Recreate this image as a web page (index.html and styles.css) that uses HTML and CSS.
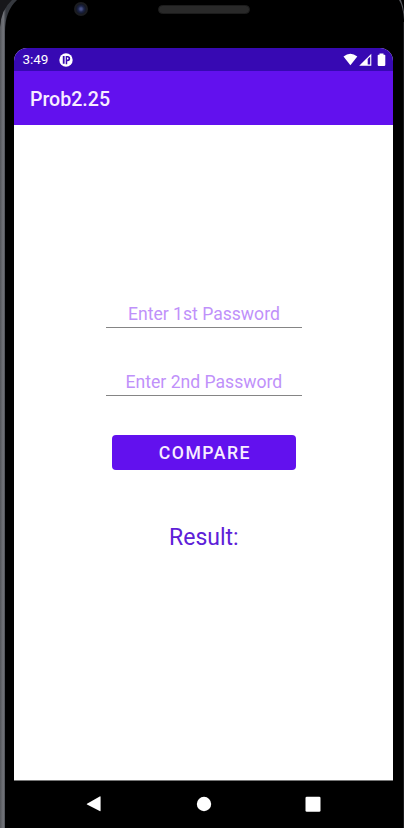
FILE: index.html
```html
<!DOCTYPE html>
<html lang="en">
<head>
<meta charset="utf-8">
<title>Prob2.25</title>
<link rel="stylesheet" href="styles.css">
</head>
<body>
<div class="phone">
  <svg class="frame" width="404" height="828" viewBox="0 0 404 828" aria-hidden="true">
    <defs>
      <linearGradient id="edge" x1="0" x2="6" y1="0" y2="0" gradientUnits="userSpaceOnUse">
        <stop offset="0" stop-color="#54565b"/>
        <stop offset=".55" stop-color="#73757b"/>
        <stop offset="1" stop-color="#35383e"/>
      </linearGradient>
    </defs>
    <path d="M0 0H15Q0 12 0 27Z" fill="#17171a"/>
    <path d="M0 828V27Q1 10 12 0H17Q5 11 5 32V828Z" fill="url(#edge)"/>
    <path d="M399 0Q403 6 404 20V12Q403 5 401 0Z" fill="#55575c"/>
    <path d="M403.5 22V828" stroke="#1c1c1e"/>
  </svg>
  <header class="bezel">
    <span class="camera"></span>
    <span class="speaker"></span>
  </header>
  <main class="screen">
    <div class="status">
      <span class="clock">3:49</span>
      <svg class="notice" width="14" height="14" viewBox="0 0 14 14"><circle cx="7" cy="7" r="6.7" fill="#fff"/><path d="M3.8 3H5.6V10.8H3.8Z" fill="#3709b3"/><path fill-rule="evenodd" d="M6.7 3H8.6A2.6 2.6 0 0 1 8.6 8.2H8.2V11.2H6.7ZM8 4.6V6.6H8.5A1 1 0 0 0 8.5 4.6Z" fill="#3709b3"/></svg>
      <svg class="signals" width="44" height="14" viewBox="0 0 44 14" fill="#fff"><path d="M.5 3.5Q7.3-1.8 14.3 3.5L7.4 12.3Z"/><path fill-rule="evenodd" d="M16.2 12.8 28.3.8V12.8ZM24.7 6V11.5H27.2V3.6Z"/><path d="M36.5 1.7V.6H40.5V1.7H41.5Q42.3 1.7 42.3 2.5V12.1Q42.3 12.9 41.5 12.9H35.5Q34.7 12.9 34.7 12.1V2.5Q34.7 1.7 35.5 1.7Z"/></svg>
    </div>
    <div class="appbar"><h1 class="title">Prob2.25</h1></div>
    <form class="content">
      <input class="field" type="text" placeholder="Enter 1st Password" aria-label="Enter 1st Password">
      <input class="field" type="text" placeholder="Enter 2nd Password" aria-label="Enter 2nd Password">
      <button class="compare" type="button">COMPARE</button>
      <p class="result">Result:</p>
    </form>
  </main>
  <nav class="nav">
    <svg width="16" height="18" viewBox="0 0 16 18" fill="#fff"><path d="M1 8.7 13.7 1.4Q14.6 1 14.6 2V15.6Q14.6 16.6 13.7 16.1L1 9.5Q.4 9.1 1 8.7Z"/></svg>
    <svg width="16" height="18" viewBox="0 0 16 18" fill="#fff"><circle cx="8" cy="9" r="7.2"/></svg>
    <svg width="16" height="18" viewBox="0 0 16 18" fill="#fff"><rect x=".5" y="1.7" width="15" height="15" rx="1.3"/></svg>
  </nav>
</div>
</body>
</html>
```
FILE: styles.css
```css
* { box-sizing: border-box; }
body { margin: 0; background: #000; font-family: Roboto, sans-serif; }
.phone { position: relative; display: flex; flex-direction: column; width: 404px; height: 828px; overflow: hidden; background: #000; }
.frame { position: absolute; top: 0; left: 0; }
.bezel { display: flex; align-items: flex-start; height: 48px; padding: 2px 0 0 74px; }
.camera { width: 14px; height: 14px; border-radius: 50%; border: 2px solid #1b1c20; background: radial-gradient(circle, #475086 0 1px, #1c2344 3px, #141828 5px); }
.speaker { width: 92px; height: 9px; margin: 3px 0 0 70px; border-radius: 5px; border: 1px solid #1c1c1c; background: #292929; }
.screen { width: 379px; height: 733px; margin-left: 14.4px; border-radius: 13px 13px 0 0; overflow: hidden; background: #fff; border-bottom: 1px solid #777; }
.status { display: flex; align-items: center; height: 23px; padding: 0 6px 0 8px; background: #3709b3; color: #fff; }
.clock { width: 37px; font-size: 13.5px; line-height: 23px; }
.signals { margin-left: auto; }
.appbar { display: flex; align-items: center; height: 54px; padding: 3px 15.5px 0; background: #6211ee; }
.title { margin: 0; color: #f8edff; font-size: 19.6px; font-weight: 500; line-height: 25px; }
.content { display: flex; flex-direction: column; align-items: center; padding-top: 173px; }
.field { width: 196px; height: 30px; margin: 0 0 38px; padding: 3px 0 0; border: 0; border-bottom: 1px solid #858585; border-radius: 0; outline: 0; background: none; font: 17.6px Roboto, sans-serif; text-align: center; }
.field::placeholder { color: #bf91fa; opacity: 1; }
.compare { width: 184px; height: 35px; margin: 1px 0 0; padding: 1px 0 0 2px; border: 0; border-radius: 4px; background: #6211ee; color: #f8edff; font: 500 17.6px Roboto, sans-serif; letter-spacing: 1.5px; }
.result { margin: 53px 0 0; color: #5d20d8; font-size: 23px; line-height: 30px; }
.nav { display: flex; justify-content: space-between; padding: 14px 83px 0 86px; }
```
